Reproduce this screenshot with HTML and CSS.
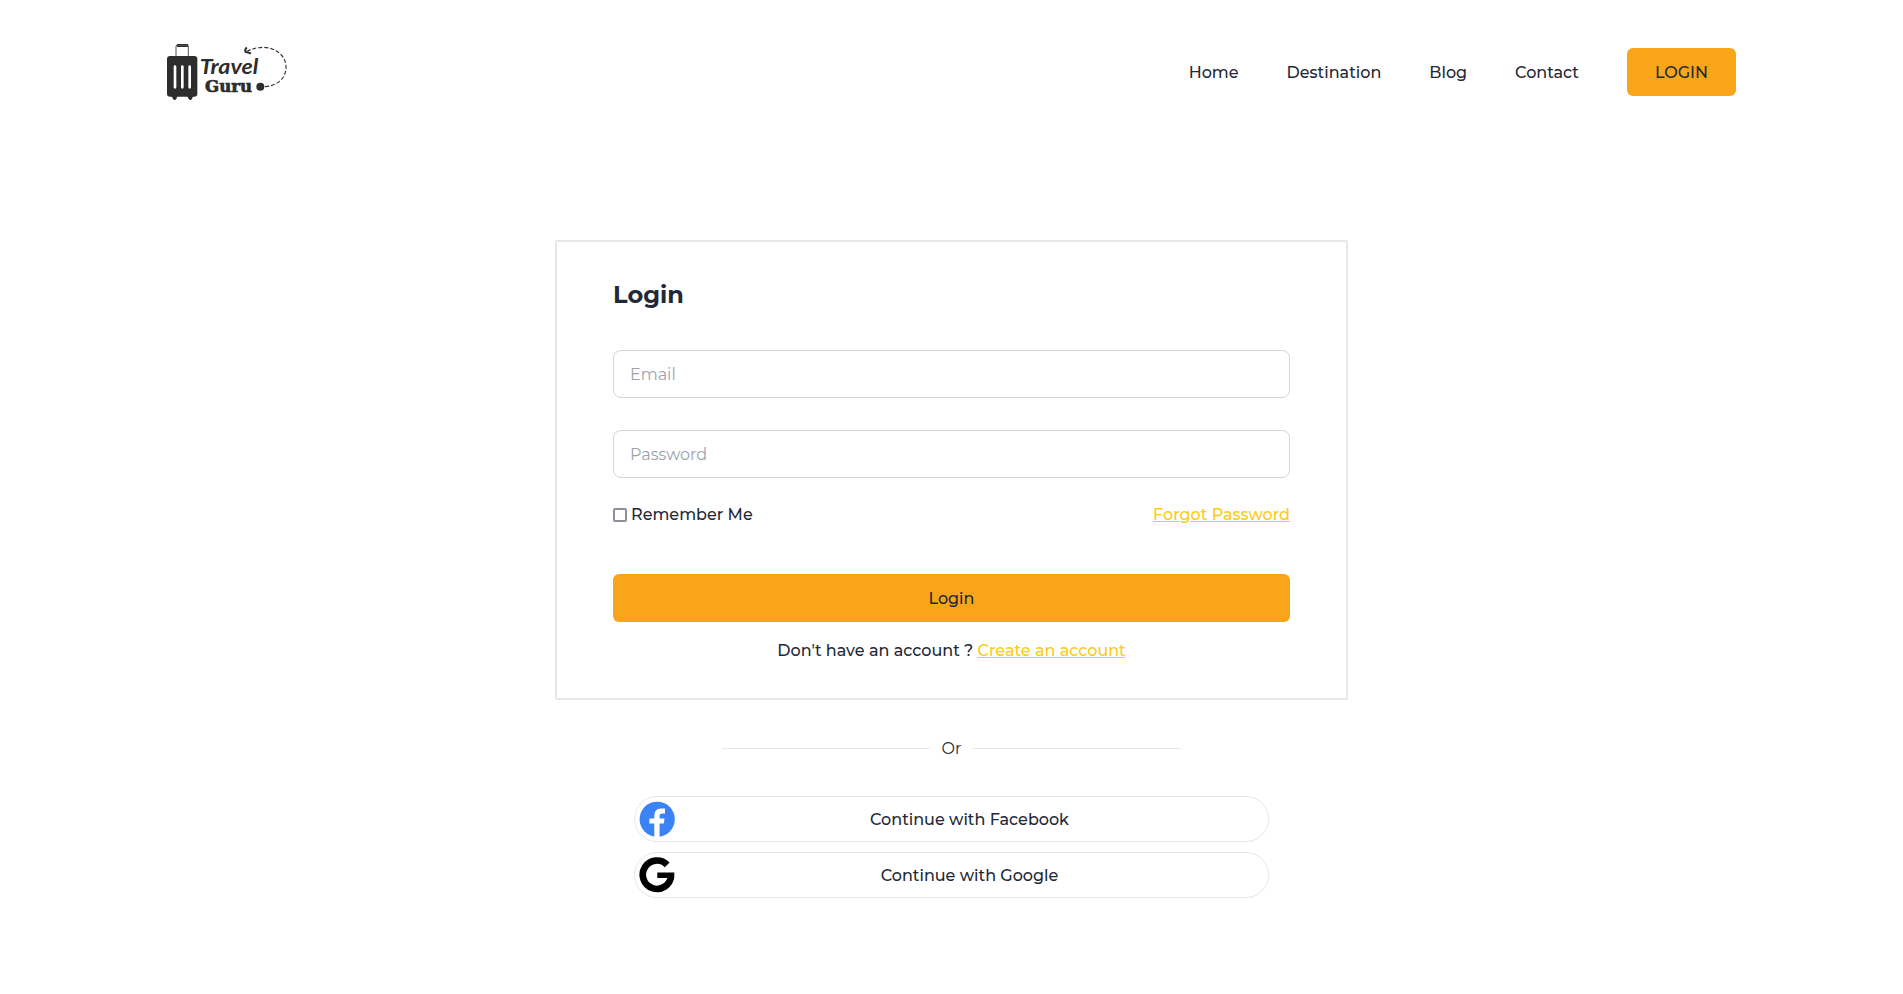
FILE: index.html
```html
<!DOCTYPE html>
<html lang="en">
<head>
<meta charset="utf-8">
<title>Travel Guru</title>
<link rel="stylesheet" href="styles.css">
</head>
<body>
<header class="header">
  <a class="brand">
    <svg class="logo" viewBox="36 24 363 174" aria-label="Travel Guru">
      <g fill="#2d2d2d">
        <rect x="36" y="63" width="91" height="122" rx="9"/>
        <rect x="65" y="27" width="35" height="9" rx="3"/>
        <path d="M50 183h17l-3 9q-5 6-10 0zM97 183h17l-3 9q-5 6-10 0z"/>
        <circle cx="316" cy="155" r="12"/>
        <text class="logo-travel" x="134" y="118" textLength="176" lengthAdjust="spacingAndGlyphs">Travel</text>
        <text class="logo-guru" x="150" y="172" textLength="141" lengthAdjust="spacingAndGlyphs">Guru</text>
      </g>
      <path d="M63 64V33Q63 31 66 31H98Q100 31 100 34V64" fill="none" stroke="#555" stroke-width="3"/>
      <path d="M60 95v62M82 95v62M104 95v62" stroke="#fff" stroke-width="8" stroke-linecap="round"/>
      <path d="M330 155C370 152 393 128 393 97C393 60 360 37 322 37Q298 38 277 48" fill="none" stroke="#333" stroke-width="3.4" stroke-dasharray="12 6"/>
      <path d="M275 37Q268 46 272 51Q280 52 288 56" fill="none" stroke="#2d2d2d" stroke-width="6"/>
    </svg>
  </a>
  <nav class="nav">
    <a>Home</a>
    <a>Destination</a>
    <a>Blog</a>
    <a>Contact</a>
    <a class="login-link">LOGIN</a>
  </nav>
</header>
<main class="main">
  <form class="card">
    <h1 class="title">Login</h1>
    <input class="field email" type="email" placeholder="Email">
    <input class="field" type="password" placeholder="Password">
    <div class="options">
      <label class="remember"><span class="check"></span><span>Remember Me</span></label>
      <a class="link">Forgot Password</a>
    </div>
    <button class="submit" type="button">Login</button>
    <p class="signup">Don't have an account ? <a class="link">Create an account</a></p>
  </form>
  <div class="divider"><span>Or</span></div>
  <div class="social">
    <button class="provider" type="button">
      <svg class="icon" viewBox="0 0 36 36">
        <circle cx="18.2" cy="18.3" r="17.6" fill="#3b82f6"/>
        <path d="M15.3 36V22.5h-4.9v-5h4.9V14.4q0-6.9 6.9-6.9h3.8v5h-2.7q-2.7 0-2.7 2.7v2.3h4.9l-.7 5h-4.2V36z" fill="#fff"/>
      </svg>
      <span>Continue with Facebook</span>
    </button>
    <button class="provider" type="button">
      <svg class="icon" viewBox="0 0 36 36">
        <path d="M28.2 7.9A14.2 14.2 0 1 0 32.1 19" fill="none" stroke="#000" stroke-width="6.7"/>
        <path d="M18.3 15.5H35.3V19.2H32L29 20.9H18.3z"/>
      </svg>
      <span>Continue with Google</span>
    </button>
  </div>
</main>
</body>
</html>
```
FILE: styles.css
```css
* { box-sizing: border-box; }
body {
  margin: 0;
  background: #fff;
  color: #1f2937;
  font: 500 16px/24px Montserrat, Inter, sans-serif;
}
button, input { font: inherit; color: inherit; }

.header {
  height: 144px;
  padding: 0 167px;
  display: flex;
  align-items: center;
  justify-content: space-between;
}
.logo { display: block; width: 121px; height: 58px; }
.logo-travel { font: italic 700 60px Lato, sans-serif; }
.logo-guru { font: 700 50px "DejaVu Serif", serif; stroke: #2d2d2d; stroke-width: 2px; }

.nav { display: flex; align-items: center; gap: 48px; }
.nav a { padding-top: 2px; }
.nav .login-link {
  padding: 13px 28px 11px;
  border-radius: 6px;
  background: #f9a51a;
}

.main { display: flex; flex-direction: column; align-items: center; padding-top: 96px; }
.card {
  width: 793px;
  height: 460px;
  padding: 37px 56px 0;
  border: 2px solid #e5e7eb;
  border-radius: 2px;
}
.title { margin: 0 0 39px; font-size: 24px; line-height: 32px; font-weight: 700; }
.field {
  display: block;
  width: 100%;
  height: 48px;
  padding: 0 16px;
  border: 1px solid #d1d5db;
  border-radius: 8px;
  background: #fff;
  font-weight: 400;
}
.field::placeholder { color: #9ca3af; opacity: 1; }
.email { margin-bottom: 32px; }
.options { display: flex; justify-content: space-between; margin-top: 25px; }
.remember { display: flex; align-items: center; gap: 4px; }
.check { width: 14px; height: 14px; margin-bottom: 1px; border: 2px solid #8f8d9c; border-radius: 2px; }
.link { color: #facc15; text-decoration: underline; }
.submit {
  display: block;
  width: 100%;
  height: 48px;
  margin-top: 47px;
  padding: 2px 0 0;
  border: 0;
  border-radius: 6px;
  background: #f9a51a;
}
.signup { margin: 17px 0 0; text-align: center; }

.divider { display: flex; align-items: center; gap: 12px; width: 459px; margin-top: 36px; font-weight: 400; }
.divider span { padding-top: 1px; margin-bottom: -1px; }
.divider::before, .divider::after { content: ""; flex: 1; height: 1px; background: #e5e7eb; }
.social { display: flex; flex-direction: column; gap: 10px; width: 635px; margin-top: 36px; }
.provider {
  display: flex;
  align-items: center;
  height: 46px;
  padding: 0 4px;
  border: 1px solid #e5e7eb;
  border-radius: 23px;
  background: #fff;
}
.provider span { flex: 1; padding-top: 2px; text-align: center; }
.icon { width: 36px; height: 36px; margin-top: -1px; }
```
